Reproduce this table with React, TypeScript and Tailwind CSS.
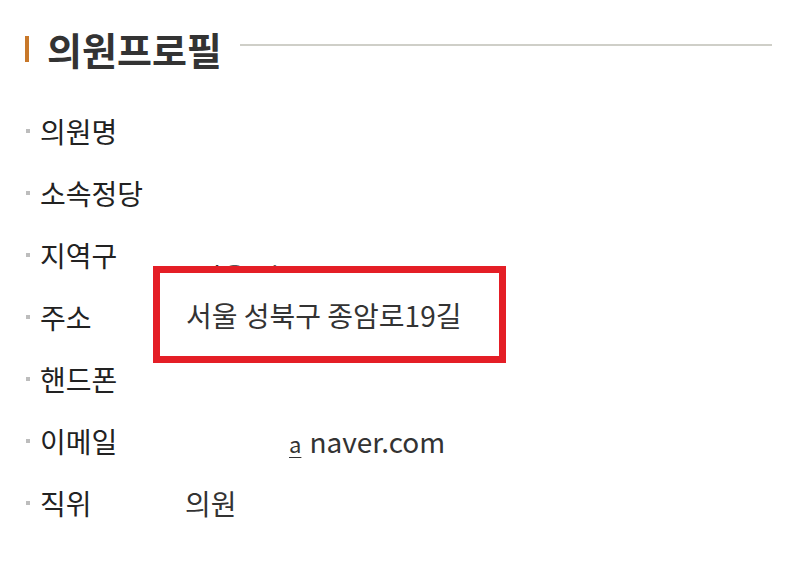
import React from "react";

const rows: { label: string; value?: string }[] = [
  { label: "의원명" },
  { label: "소속정당" },
  { label: "지역구" },
  { label: "주소" },
  { label: "핸드폰" },
  { label: "이메일" },
  { label: "직위", value: "의원" },
];

export default function App() {
  return (
    <div
      className="relative w-[809px] h-[573px] bg-white text-[#333]"
      style={{ fontFamily: '"Noto Sans CJK KR", "Noto Sans", sans-serif' }}
    >
      <div className="flex items-center pt-[26px] pl-[25px] pr-[37px] h-[72px]">
        <div className="w-[4px] h-[26px] bg-[#c8782a]" />
        <div className="ml-[18px] text-[38px] font-bold leading-none text-[#333]">
          의원프로필
        </div>
        <div className="flex-1 ml-[18px] mt-[-9px] h-[2px] bg-[#cfcfc8]" />
      </div>
      <div className="pt-[28px]">
        {rows.map((r) => (
          <div key={r.label} className="flex items-center h-[62px] pl-[26px]">
            <div className="w-[4px] h-[4px] bg-[#bdbdbd]" />
            <div className="ml-[10px] w-[145px] text-[28px] leading-none text-[#222]">
              {r.label}
            </div>
            {r.label === "이메일" ? (
              <div className="ml-[104px] flex items-baseline text-[28px] leading-none text-[#333]">
                <span className="text-[22px] underline decoration-1 underline-offset-4 mr-[8px]">a</span>
                <span>naver.com</span>
              </div>
            ) : r.value ? (
              <div className="text-[28px] leading-none text-[#333]">{r.value}</div>
            ) : null}
          </div>
        ))}
      </div>
      <div className="absolute left-[196px] top-[263px] text-[28px] leading-none text-[#333]">
        서울 성북
      </div>
      <div className="absolute left-[153px] top-[266px] w-[353px] h-[97px] border-[7px] border-[#e41e26] bg-white flex items-center pl-[26px]">
        <span className="text-[28px] leading-none text-[#333]">서울 성북구 종암로19길</span>
      </div>
    </div>
  );
}
